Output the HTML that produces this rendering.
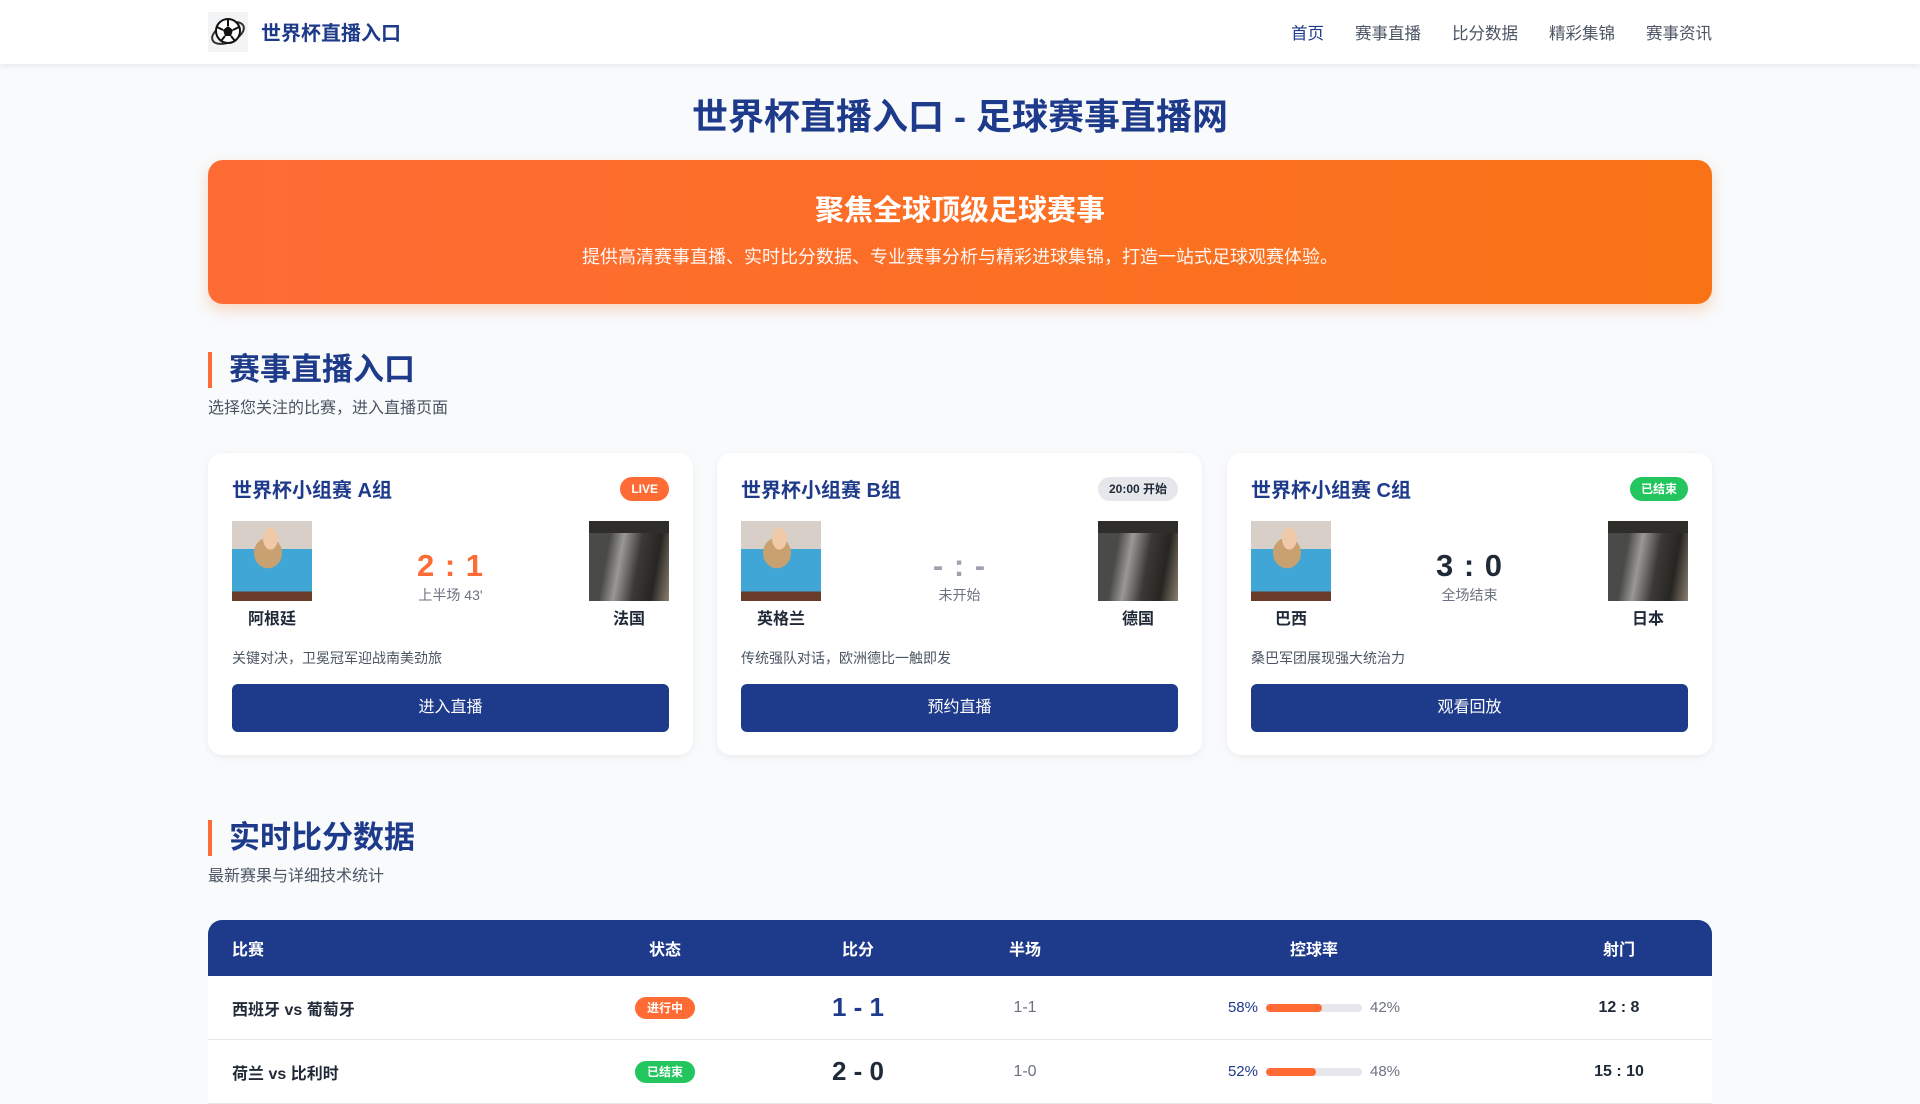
<!DOCTYPE html>
<html><head><meta charset="utf-8"><style>
*{margin:0;padding:0;box-sizing:border-box}
body{width:1920px;height:1080px;overflow:hidden;background:#f8fafc;font-family:"Liberation Sans","Noto Sans CJK SC",sans-serif;color:#1f2937}
.nav{height:64px;background:#fff;box-shadow:0 2px 6px rgba(0,0,0,.08);position:relative}
.logo{position:absolute;left:208px;top:12px;width:40px;height:40px;background:#f3f4f6}
.brand{position:absolute;left:261px;top:17px;font-size:20px;font-weight:bold;color:#1e3a8a}
.links{position:absolute;right:208px;top:20px;font-size:16.5px;color:#4b5563}
.links span{margin-left:31px}
.links span:first-child{color:#1e3a8a}
h1{position:absolute;left:0;width:1920px;top:88px;text-align:center;font-size:36px;color:#1e3a8a;font-weight:bold}
.hero{position:absolute;left:208px;top:160px;width:1504px;height:144px;border-radius:15px;background:linear-gradient(90deg,#ff6b35,#f97316);color:#fff;text-align:center;box-shadow:0 6px 14px rgba(249,115,22,.25)}
.hero h2{font-size:29px;margin-top:27px}
.hero p{font-size:18px;margin-top:14px;opacity:.95}
.sec{position:absolute;left:208px;border-left:4px solid #ff6b35;padding-left:17px;font-size:31px;font-weight:bold;color:#1e3a8a;height:36px;line-height:36px}
.sub{position:absolute;left:208px;font-size:16px;color:#4b5563}
.card{position:absolute;top:453px;width:485px;height:302px;background:#fff;border-radius:14px;box-shadow:0 2px 8px rgba(0,0,0,.06);padding:0 24px}
.ct{position:absolute;left:24px;top:21px;font-size:20px;font-weight:bold;color:#1e3a8a}
.bd{position:absolute;right:24px;top:24px;height:24px;line-height:24px;border-radius:12px;padding:0 11px;font-size:12px;font-weight:bold;color:#fff}
.img1,.img2{position:absolute;top:68px;width:80px;height:80px}
.img1{left:24px;background:radial-gradient(ellipse at 48% 22%,#f0c9a8 0 12%,transparent 13%),radial-gradient(ellipse at 45% 40%,#c9a070 0 22%,transparent 23%),linear-gradient(180deg,#d8cfc8 0 35%,#3fa6d6 35% 88%,#6b3b2a 88%);}
.img2{right:24px;background:linear-gradient(180deg,#2e2d2a 0 15%,transparent 15%),linear-gradient(100deg,#4a4a48 0 25%,#9a9895 40%,#3a3936 60%,#262522 80%,#8b7f6f 100%)}
.tn1,.tn2{position:absolute;top:152px;font-size:16px;font-weight:bold;color:#1f2937}
.sc{position:absolute;left:0;width:100%;top:95px;text-align:center;font-size:31px;font-weight:bold;letter-spacing:1px}
.ss{position:absolute;left:0;width:100%;top:132px;text-align:center;font-size:14px;color:#6b7280}
.desc{position:absolute;left:24px;top:195px;font-size:14px;color:#4b5563}
.btn{position:absolute;left:24px;right:24px;top:231px;height:48px;line-height:48px;background:#1e3a8a;color:#fff;text-align:center;border-radius:6px;font-size:16px}
.tbl{position:absolute;left:208px;top:920px;width:1504px;background:#fff;border-radius:14px 14px 0 0;overflow:hidden}
.row{display:grid;grid-template-columns:377px 160px 226px 108px 470px 140px 23px;align-items:center}
.th{background:#1e3a8a;color:#fff;height:56px;font-size:16px;font-weight:bold}
.tr{height:64px;border-bottom:1px solid #e5e7eb;font-size:16px}
.row>div{text-align:center}
.row>div:first-child{text-align:left;padding-left:24px}
.tr>div:first-child{font-weight:bold}
.pill{display:inline-block;height:22px;line-height:22px;padding:0 12px;border-radius:11px;color:#fff;font-size:12px;font-weight:bold}
.big{font-size:26px;font-weight:bold;color:#1e3a8a}
.pos{display:flex;align-items:center;justify-content:center;font-size:15px}
.bar{width:96px;height:8px;border-radius:4px;background:#e5e7eb;margin:0 8px;overflow:hidden}
.bar i{display:block;height:100%;background:#ff6b35;border-radius:4px}
</style></head><body>
<div class="nav">
<div class="logo"><svg width="40" height="40" viewBox="0 0 40 40"><ellipse cx="20" cy="21" rx="17" ry="9" fill="none" stroke="#333" stroke-width="2" transform="rotate(-25 20 21)"/><circle cx="20" cy="19" r="12" fill="#fff" stroke="#111" stroke-width="2"/><polygon points="20,14 25,18 23,24 17,24 15,18" fill="#111"/><path d="M20 7v7M25 18l6-3M23 24l4 5M17 24l-4 5M15 18l-6-3" stroke="#111" stroke-width="2"/></svg></div>
<div class="brand">世界杯直播入口</div>
<div class="links"><span>首页</span><span>赛事直播</span><span>比分数据</span><span>精彩集锦</span><span>赛事资讯</span></div>
</div>
<h1>世界杯直播入口 - 足球赛事直播网</h1>
<div class="hero"><h2>聚焦全球顶级足球赛事</h2><p>提供高清赛事直播、实时比分数据、专业赛事分析与精彩进球集锦，打造一站式足球观赛体验。</p></div>
<div class="sec" style="top:352px">赛事直播入口</div>
<div class="sub" style="top:394px">选择您关注的比赛，进入直播页面</div>

<div class="card" style="left:208px">
<div class="ct">世界杯小组赛 A组</div><div class="bd" style="background:#ff6b35">LIVE</div>
<div class="img1"></div><div class="img2"></div>
<div class="sc" style="color:#ff6b35">2 : 1</div><div class="ss">上半场 43'</div>
<div class="tn1" style="left:40px">阿根廷</div><div class="tn2" style="right:48px">法国</div>
<div class="desc">关键对决，卫冕冠军迎战南美劲旅</div><div class="btn">进入直播</div>
</div>
<div class="card" style="left:717px">
<div class="ct">世界杯小组赛 B组</div><div class="bd" style="background:#e5e7eb;color:#1f2937">20:00 开始</div>
<div class="img1"></div><div class="img2"></div>
<div class="sc" style="color:#9ca3af">- : -</div><div class="ss">未开始</div>
<div class="tn1" style="left:40px">英格兰</div><div class="tn2" style="right:48px">德国</div>
<div class="desc">传统强队对话，欧洲德比一触即发</div><div class="btn">预约直播</div>
</div>
<div class="card" style="left:1227px">
<div class="ct">世界杯小组赛 C组</div><div class="bd" style="background:#22c55e">已结束</div>
<div class="img1"></div><div class="img2"></div>
<div class="sc" style="color:#1f2937">3 : 0</div><div class="ss">全场结束</div>
<div class="tn1" style="left:48px">巴西</div><div class="tn2" style="right:48px">日本</div>
<div class="desc">桑巴军团展现强大统治力</div><div class="btn">观看回放</div>
</div>

<div class="sec" style="top:820px">实时比分数据</div>
<div class="sub" style="top:862px">最新赛果与详细技术统计</div>
<div class="tbl">
<div class="row th"><div>比赛</div><div>状态</div><div>比分</div><div>半场</div><div>控球率</div><div>射门</div><div></div></div>
<div class="row tr"><div>西班牙 vs 葡萄牙</div><div><span class="pill" style="background:#ff6b35">进行中</span></div><div class="big">1 - 1</div><div style="color:#6b7280">1-1</div><div class="pos"><span style="color:#1e3a8a">58%</span><span class="bar"><i style="width:58%"></i></span><span style="color:#6b7280">42%</span></div><div style="font-weight:bold">12 : 8</div><div></div></div>
<div class="row tr"><div>荷兰 vs 比利时</div><div><span class="pill" style="background:#22c55e">已结束</span></div><div class="big" style="color:#1f2937">2 - 0</div><div style="color:#6b7280">1-0</div><div class="pos"><span style="color:#1e3a8a">52%</span><span class="bar"><i style="width:52%"></i></span><span style="color:#6b7280">48%</span></div><div style="font-weight:bold">15 : 10</div><div></div></div>
</div>
</body></html>
